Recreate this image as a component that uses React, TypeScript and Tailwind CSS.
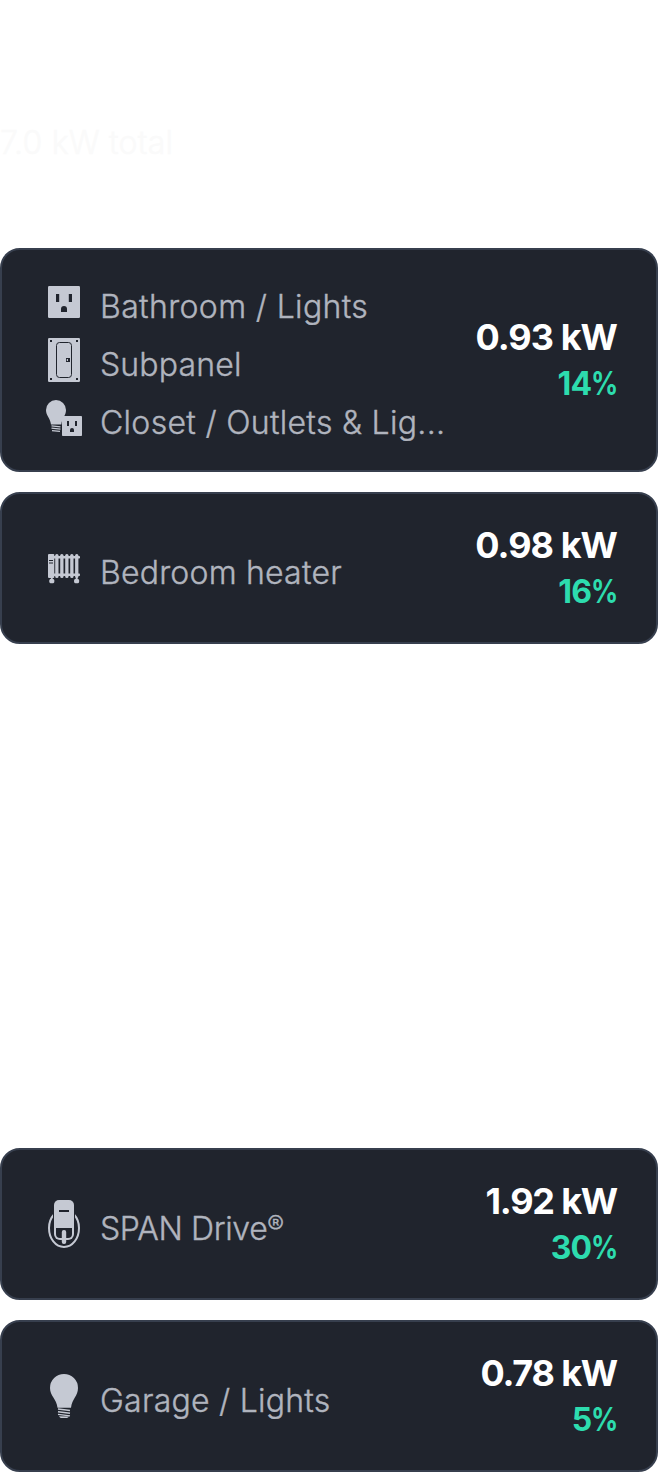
import type { ReactNode } from 'react'

function OutletIcon() {
  return (
    <svg width="32" height="32" viewBox="0 0 32 32" fill="#c5c9d3">
      <rect width="32" height="32" rx="1.2" />
      <g fill="#20242d">
        <rect x="8" y="8" width="3.2" height="8" />
        <rect x="20.8" y="8" width="3.2" height="8" />
        <path d="M13 26v-3a3 3 0 0 1 6 0v3z" />
      </g>
    </svg>
  )
}

function SubpanelIcon() {
  return (
    <svg width="32" height="44" viewBox="0 0 32 44" fill="#c5c9d3">
      <rect width="32" height="44" rx="1.2" />
      <g fill="#20242d">
        <rect x="2" y="2" width="2" height="2" />
        <rect x="28" y="2" width="2" height="2" />
        <rect x="2" y="40" width="2" height="2" />
        <rect x="28" y="40" width="2" height="2" />
        <rect x="18" y="20" width="4" height="4" />
      </g>
      <rect x="18.8" y="21" width="1.2" height="2" />
      <rect x="8.5" y="4.5" width="15" height="35" rx="3" fill="none" stroke="#20242d" />
    </svg>
  )
}

function BulbOutletIcon() {
  return (
    <svg width="36" height="36" viewBox="0 0 36 36" fill="#c5c9d3">
      <path d="M10 0a10 10 0 0 1 10 10c0 6-3.800 7-4.700 14.500H5C4 17 0 16 0 10A10 10 0 0 1 10 0z" />
      <path d="M5.500 25.800l9 1M5.500 28.200l9 1M6 30.600l8 .8" stroke="#c5c9d3" strokeWidth="1.300" />
      <rect x="16" y="16" width="20" height="20" rx=".8" />
      <g fill="#20242d">
        <rect x="21" y="21" width="2" height="5" />
        <rect x="29" y="21" width="2" height="5" />
        <path d="M24 32v-2a2 2 0 0 1 4 0v2z" />
      </g>
    </svg>
  )
}

function HeaterIcon() {
  return (
    <svg width="32" height="30" viewBox="0 -1 32 30" className="translate-y-[0.5px]" fill="#c5c9d3">
      <rect y="-.5" width="6.300" height="24" rx="1" />
      <rect x="5" y="1.500" width="27" height="2.500" rx=".8" />
      <rect x="5" y="19" width="27" height="2.500" rx=".8" />
      <rect x="7.200" y="-.5" width="3.300" height="24" rx="1.500" />
      <rect x="12.200" y="-.5" width="3.300" height="24" rx="1.500" />
      <rect x="17.200" y="-.5" width="3.300" height="24" rx="1.500" />
      <rect x="22.200" y="-.5" width="3.300" height="24" rx="1.500" />
      <rect x="27.100" y="-.5" width="3.300" height="24" rx="1.500" />
      <rect x="3" y="22.500" width="1.600" height="3" />
      <rect x="27.900" y="22.500" width="1.600" height="3" />
      <circle cx="3.800" cy="26.500" r="2.600" />
      <circle cx="28.600" cy="26.500" r="2.600" />
      <path d="M1 6h4M1 8.500h4" stroke="#20242d" />
    </svg>
  )
}

function ChargerIcon() {
  return (
    <svg width="32" height="48" viewBox="0 0 32 48" fill="none">
      <path
        d="M6 14.500C2.800 18 1 23 1 28c0 10.500 6.500 19 15 19s15-8.500 15-19c0-5-1.800-10-5-13.500"
        stroke="#c5c9d3"
        strokeWidth="2"
      />
      <path d="M5 12h22v16H5z" fill="#20242d" />
      <path d="M6 5a5 5 0 0 1 5-5h10a5 5 0 0 1 5 5v29a6 6 0 0 1-6 6h-8a6 6 0 0 1-6-6z" fill="#c5c9d3" />
      <path d="M8 28h16v6a4 4 0 0 1-4 4h-8a4 4 0 0 1-4-4z" fill="#20242d" />
      <rect x="11" y="10" width="10" height="2" fill="#20242d" />
      <rect x="13.800" y="30" width="4.400" height="14" rx="2" fill="#c5c9d3" />
    </svg>
  )
}

function BulbIcon() {
  return (
    <svg width="28" height="44" viewBox="0 0 28 44" fill="#c5c9d3">
      <path d="M14 0a14 14 0 0 1 14 14c0 8-6 11-7 19.800H7.500C6.500 25 0 22 0 14A14 14 0 0 1 14 0z" />
      <path d="M8 35l12 1.500M8 37.700l12 1.500M8 40.400l12 1.500" stroke="#c5c9d3" strokeWidth="1.400" />
      <path d="M9 42.200l10 .4c-.6.900-1.300 1.400-2.200 1.400h-5.200c-1.200 0-2-.8-2.600-1.800z" />
    </svg>
  )
}

interface Circuit {
  icon: ReactNode
  label: ReactNode
  tracking: string
}

interface CircuitCardProps {
  circuits: Circuit[]
  power: string
  powerTracking: string
  percent: number
}

function CircuitCard({ circuits, power, powerTracking, percent }: CircuitCardProps) {
  return (
    <div className="flex items-center justify-between rounded-[20px] border-2 border-[#373f4e] bg-[#20242d] pl-[42px] pr-[39px] py-[23px]">
      <div>
        {circuits.map((circuit, i) => (
          <div key={i} className="flex h-[58px] items-center gap-[16px]">
            <div className="flex w-10 shrink-0 justify-center">{circuit.icon}</div>
            <div
              className={`pt-[10px] text-[32px] leading-[48px] font-light whitespace-nowrap text-[#b0b4be] [-webkit-text-stroke:0.4px_#b0b4be] ${circuit.tracking}`}
            >
              {circuit.label}
            </div>
          </div>
        ))}
      </div>

      <div className="pt-[4px] pb-[6px] text-right font-bold whitespace-nowrap">
        <div className={`text-[36px] leading-[48px] text-white ${powerTracking}`}>{power}</div>
        <div className="flex h-[44px] justify-end text-[32px] leading-[45px] tracking-[-0.8px] text-[#2ddcae]">
          <span>{percent}</span>
          <span className="-ml-[5px] origin-right scale-x-[0.84] tracking-[-1.8px]">%</span>
        </div>
      </div>
    </div>
  )
}

export default function App() {
  return (
    <div className="min-h-[1472px] w-[658px] overflow-hidden bg-white font-['Inter','Liberation_Sans',sans-serif]">
      <div className="h-[248px] pt-[119px] text-[32px] leading-[48px] font-light tracking-[0.2px] text-[#fafafa] [-webkit-text-stroke:0.4px_#fafafa]">
        7.0 kW total
      </div>

      <div className="flex flex-col gap-5">
        <CircuitCard
          circuits={[
            { icon: <OutletIcon />, label: 'Bathroom / Lights', tracking: 'tracking-[0.36px]' },
            { icon: <SubpanelIcon />, label: 'Subpanel', tracking: 'tracking-[0.15px]' },
            { icon: <BulbOutletIcon />, label: 'Closet / Outlets & Lig...', tracking: 'tracking-[0.3px]' },
          ]}
          power="0.93 kW"
          powerTracking="tracking-[-0.95px]"
          percent={14}
        />
        <div className="h-[152px] *:h-full">
          <CircuitCard
            circuits={[{ icon: <HeaterIcon />, label: 'Bedroom heater', tracking: 'tracking-[0.2px]' }]}
            power="0.98 kW"
            powerTracking="tracking-[-0.95px]"
            percent={16}
          />
        </div>
      </div>

      <div className="mt-[504px] flex flex-col gap-5">
        <div className="h-[152px] *:h-full">
          <CircuitCard
            circuits={[
              {
                icon: <ChargerIcon />,
                label: (
                  <>
                    SPAN Drive<span className="align-[6px] text-[25px] leading-none">®</span>
                  </>
                ),
                tracking: 'tracking-[-0.35px]',
              },
            ]}
            power="1.92 kW"
            powerTracking="tracking-[-1.2px]"
            percent={30}
          />
        </div>
        <div className="h-[152px] *:h-full">
          <CircuitCard
            circuits={[{ icon: <BulbIcon />, label: 'Garage / Lights', tracking: 'tracking-[0.25px]' }]}
            power="0.78 kW"
            powerTracking="tracking-[-1.2px]"
            percent={5}
          />
        </div>
      </div>
    </div>
  )
}
